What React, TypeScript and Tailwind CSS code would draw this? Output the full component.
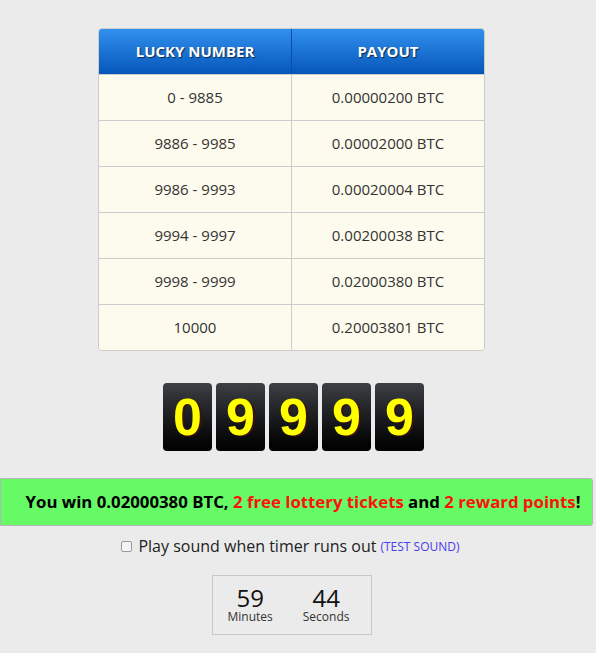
const rows = [
  ["0 - 9885", "0.00000200 BTC"],
  ["9886 - 9985", "0.00002000 BTC"],
  ["9986 - 9993", "0.00020004 BTC"],
  ["9994 - 9997", "0.00200038 BTC"],
  ["9998 - 9999", "0.02000380 BTC"],
  ["10000", "0.20003801 BTC"],
]

const digits = ["0", "9", "9", "9", "9"]

export default function App() {
  return (
    <div className="w-[596px] h-[653px] bg-[#ebebeb] overflow-hidden font-['Open_Sans',sans-serif] text-[#333]">
      <div className="pr-[13px] pt-[28px] flex flex-col items-center">
        <table className="w-[387px] border-separate border-spacing-0 rounded-[4px] overflow-hidden border border-[#ccc] text-[15px]">
          <thead>
            <tr className="bg-gradient-to-b from-[#3190ee] to-[#0457b9] text-white h-[45px]">
              <th className="w-[193px] font-bold [text-shadow:1px_1px_1px_#0a2a55] border-r border-[#0b4fa0]">LUCKY NUMBER</th>
              <th className="font-bold [text-shadow:1px_1px_1px_#0a2a55]">PAYOUT</th>
            </tr>
          </thead>
          <tbody className="bg-[#fdfbed]">
            {rows.map((r, i) => (
              <tr key={i} className="h-[46px]">
                <td className="text-center border-t border-r border-[#ccc]">{r[0]}</td>
                <td className="text-center border-t border-[#ccc]">{r[1]}</td>
              </tr>
            ))}
          </tbody>
        </table>

        <div className="flex gap-[4px] mt-[32px] ml-[4px]">
          {digits.map((d, i) => (
            <div
              key={i}
              className="w-[49px] h-[68px] rounded-[4px] bg-gradient-to-b from-[#3d4045] to-[#020202] flex items-center justify-center text-[#ffff00] font-['Liberation_Sans',Arial,sans-serif] font-bold text-[52px] [text-shadow:2px_1px_0_#3a1010]"
            >
              {d}
            </div>
          ))}
        </div>
      </div>

      <div className="mt-[27px] w-[593px] h-[48px] bg-[#66fa66] border border-[#b5b5b5] rounded-r-[3px] flex items-center justify-center pl-[13px] text-[16.8px] font-bold text-black">
        <span>
          You win 0.02000380 BTC, <span className="text-[#ff1010]">2 free lottery tickets</span> and{" "}
          <span className="text-[#ff1010]">2 reward points</span>!
        </span>
      </div>

      <div className="pr-[13px] flex flex-col items-center">
        <div className="mt-[8px] flex items-center text-[16px] text-[#222] -ml-[2px]">
          <span className="w-[11px] h-[11px] border border-[#999] rounded-[2px] bg-[#f4f4f4] mr-[6px]" />
          <span>Play sound when timer runs out</span>
          <span className="ml-[4px] text-[12px] text-[#4a3cf0] mt-[2px]">(TEST SOUND)</span>
        </div>

        <div className="mt-[17px] w-[160px] h-[60px] border border-[#c8c8c8] flex justify-center gap-[30px] pt-[8px] pr-[6px]">
          <div className="flex flex-col items-center">
            <span className="text-[24px] leading-[28px] text-[#111]">59</span>
            <span className="text-[12px] leading-[15px] -mt-[3px]">Minutes</span>
          </div>
          <div className="flex flex-col items-center">
            <span className="text-[24px] leading-[28px] text-[#111]">44</span>
            <span className="text-[12px] leading-[15px] -mt-[3px]">Seconds</span>
          </div>
        </div>
      </div>
    </div>
  )
}
